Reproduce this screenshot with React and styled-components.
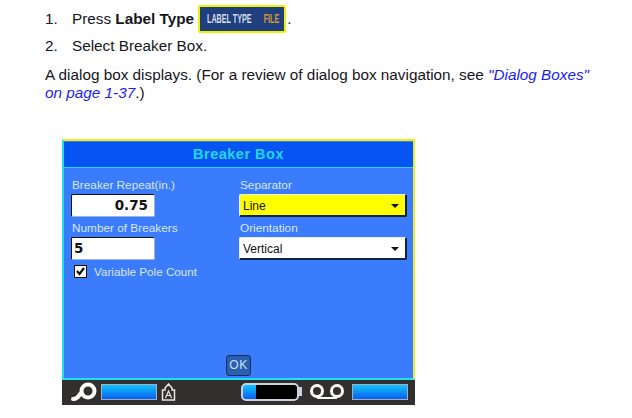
import React from 'react';
import styled, { createGlobalStyle } from 'styled-components';

const GlobalStyle = createGlobalStyle`
    html, body { margin: 0; padding: 0; background: #fff; }
    body { font-family: "Liberation Sans", Arial, sans-serif; color: #16161c; overflow: hidden; }
`;

const Page = styled.div`
    width: 632px;
    height: 418px;
    padding: 5px 0 0 45px;
    box-sizing: border-box;
    font-size: 15.3px;
`;

const Step = styled.div`
    display: flex;
    align-items: center;
    height: ${props => props.tall ? '28px' : '18px'};
    margin-bottom: ${props => props.tall ? '4px' : '11px'};
`;

const StepNumber = styled.span`
    width: 27px;
`;

const KeyCap = styled.span`
    display: flex;
    align-items: center;
    width: 88px;
    height: 28px;
    margin: 0 1px 0 4px;
    padding: 0 0 0 7px;
    box-sizing: border-box;
    border: 2px solid #f2f200;
    border-radius: 2px;
    background: #1f3f7e;
`;

const KeyText = styled.span`
    flex-shrink: 0;
    width: 118px;
    transform: scaleX(0.6);
    transform-origin: left center;
    font-size: 12px;
    font-weight: bold;
    white-space: nowrap;
    color: #d7deea;
`;

const KeyFile = styled.span`
    margin-left: 20px;
    color: #d69d32;
`;

const Paragraph = styled.p`
    width: 555px;
    margin: 0;
    line-height: 18px;
`;

const PageLink = styled.i`
    color: #1a1aff;
`;

const Screen = styled.div`
    width: 353px;
    margin: 37px 0 0 17px;
`;

const Dialog = styled.div`
    box-sizing: border-box;
    height: 241px;
    border: 2px solid #1fe0f0;
    border-top: 2px solid #f4ee10;
    border-right: 2px solid #e8f020;
    display: flex;
    flex-direction: column;
    background: #3a7cfb;
`;

const Title = styled.div`
    height: 25px;
    margin-top: 1px;
    border-bottom: 1px solid #2ad0f4;
    background: #0655f2;
    color: #22d8f2;
    font-size: 14.5px;
    font-weight: bold;
    letter-spacing: 0.5px;
    line-height: 25px;
    text-align: center;
`;

const Columns = styled.div`
    display: flex;
    flex: 1;
    padding: 10px 0 0 7px;
`;

const Column = styled.div`
    width: ${props => props.width};
    display: flex;
    flex-direction: column;
`;

const FieldLabel = styled.div`
    height: 14px;
    margin-bottom: 2px;
    padding-left: 1px;
    font-size: 11.8px;
    line-height: 14px;
    color: #d8e6fc;
`;

const NumberInput = styled.div`
    width: 84px;
    height: 23px;
    margin-bottom: 4px;
    padding: 0 6px 0 2px;
    box-sizing: border-box;
    border: 1px solid #111;
    border-right-color: #9db4d8;
    border-bottom-color: #9db4d8;
    border-radius: 2px;
    background: #fff;
    color: #111;
    font-family: "DejaVu Sans", sans-serif;
    font-size: 13.5px;
    font-weight: bold;
    line-height: 21px;
    text-align: ${props => props.align};
`;

const Select = styled.div`
    display: flex;
    align-items: center;
    justify-content: space-between;
    width: 168px;
    height: 23px;
    margin-bottom: 4px;
    padding: 2px 6px 0 3px;
    box-sizing: border-box;
    border-top: 1px solid #e4ecf8;
    border-left: 1px solid #e4ecf8;
    border-right: 2px solid #14213f;
    border-bottom: 2px solid #14213f;
    border-radius: 2px;
    background: ${props => props.bg};
    color: #111;
    font-size: 12px;
`;

const Caret = styled.span`
    width: 0;
    height: 0;
    border-left: 4px solid transparent;
    border-right: 4px solid transparent;
    border-top: 4px solid #111;
`;

const CheckRow = styled.div`
    display: flex;
    align-items: center;
    gap: 7px;
    margin-top: 1px;
    padding-left: 3px;
    font-size: 11.7px;
    color: #d8e6fc;
`;

const CheckBox = styled.span`
    display: flex;
    width: 13px;
    height: 13px;
    box-sizing: border-box;
    border: 1px solid #111;
    background: #fff;
`;

const OkRow = styled.div`
    display: flex;
    justify-content: center;
    height: 23px;
`;

const OkButton = styled.div`
    width: 25px;
    height: 21px;
    box-sizing: border-box;
    border: 1px solid #16305f;
    border-radius: 3px;
    background: #2a5fb0;
    color: #cfe0fb;
    font-size: 12px;
    letter-spacing: 0.5px;
    line-height: 19px;
    text-align: center;
`;

const StatusBar = styled.div`
    display: flex;
    align-items: center;
    height: 25px;
    padding: 0 0 2px 8px;
    box-sizing: border-box;
    background: #322f2e;
`;

const Meter = styled.div`
    width: 56px;
    height: 16px;
    margin-left: ${props => props.gap};
    box-sizing: border-box;
    border: 1px solid #9fb0c4;
    background: linear-gradient(#12c4fb, #0a5ef2);
`;

const Battery = styled.div`
    width: 58px;
    height: 18px;
    margin-left: 65px;
    box-sizing: border-box;
    border: 2px solid #c7d2de;
    border-radius: 5px;
    background: linear-gradient(90deg, transparent 13px, #000 13px), linear-gradient(#12c4fb, #0a5ef2);
`;

const BatteryTip = styled.div`
    width: 3px;
    height: 9px;
    margin-right: 8px;
    background: #c7d2de;
`;

const SearchIcon = () => (
    <svg width="29" height="20" viewBox="0 0 29 20">
        <circle cx="18" cy="9" r="6.500" fill="#332f2e" stroke="#fff" strokeWidth="4" />
        <path d="M3 17c3 0 5-1 7-5" fill="none" stroke="#fff" strokeWidth="4" strokeLinecap="round" />
    </svg>
);

const CapsLockIcon = () => (
    <svg width="15" height="18" viewBox="0 0 15 18" style={{ marginLeft: 4 }}>
        <path d="M7.500 1 11 5v2h2.500v10h-12V7H4V5z" fill="none" stroke="#e8e8e8" strokeWidth="1.500" />
        <path d="M4.500 15 7.500 8l3 7M5.500 12.500h4" fill="none" stroke="#e8e8e8" strokeWidth="1.200" />
    </svg>
);

const TapeIcon = () => (
    <svg width="34" height="17" viewBox="0 0 34 17">
        <circle cx="7" cy="8" r="5.500" fill="none" stroke="#fff" strokeWidth="3" />
        <circle cx="27" cy="8" r="5.500" fill="none" stroke="#fff" strokeWidth="3" />
        <path d="M7 15h20" stroke="#fff" strokeWidth="2" />
    </svg>
);

const CheckMark = () => (
    <svg width="11" height="11" viewBox="0 0 11 11">
        <path d="M2 5l2.500 3L9 2" fill="none" stroke="#111" strokeWidth="2.200" />
    </svg>
);

export default function App() {
    return (
        <Page>
            <GlobalStyle />
            <Step tall>
                <StepNumber>1.</StepNumber>
                Press&nbsp;<b>Label Type</b>
                <KeyCap><KeyText>LABEL TYPE<KeyFile>FILE</KeyFile></KeyText></KeyCap>.
            </Step>
            <Step>
                <StepNumber>2.</StepNumber>
                Select Breaker Box.
            </Step>
            <Paragraph>
                A dialog box displays. (For a review of dialog box navigation, see <PageLink>"Dialog Boxes" on page 1-37</PageLink>.)
            </Paragraph>
            <Screen>
                <Dialog>
                    <Title>Breaker Box</Title>
                    <Columns>
                        <Column width="168px">
                            <FieldLabel>Breaker Repeat(in.)</FieldLabel>
                            <NumberInput align="right">0.75</NumberInput>
                            <FieldLabel>Number of Breakers</FieldLabel>
                            <NumberInput align="left">5</NumberInput>
                            <CheckRow><CheckBox><CheckMark /></CheckBox>Variable Pole Count</CheckRow>
                        </Column>
                        <Column width="168px">
                            <FieldLabel>Separator</FieldLabel>
                            <Select bg="#ffff00">Line<Caret /></Select>
                            <FieldLabel>Orientation</FieldLabel>
                            <Select bg="#fff">Vertical<Caret /></Select>
                        </Column>
                    </Columns>
                    <OkRow><OkButton>OK</OkButton></OkRow>
                </Dialog>
                <StatusBar>
                    <SearchIcon />
                    <Meter gap="2px" />
                    <CapsLockIcon />
                    <Battery />
                    <BatteryTip />
                    <TapeIcon />
                    <Meter gap="8px" />
                </StatusBar>
            </Screen>
        </Page>
    );
}
